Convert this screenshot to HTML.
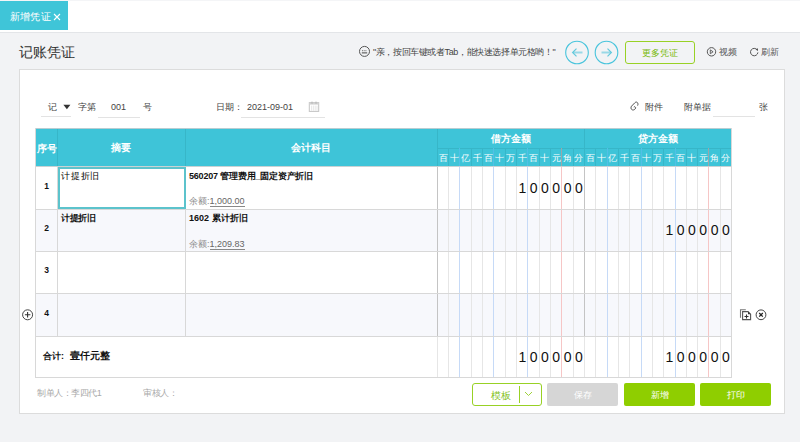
<!DOCTYPE html>
<html><head><meta charset="utf-8">
<style>
*{margin:0;padding:0;box-sizing:border-box}
html,body{width:800px;height:442px;overflow:hidden}
body{background:#f2f3f5;font-family:"Liberation Sans",sans-serif;color:#333;position:relative}
.a{position:absolute}
#top{left:0;top:0;width:800px;height:33px;background:#fff;border-bottom:1px solid #e3e5e8;border-top:1px solid #f4f5f7}
#tab{left:0;top:1px;width:68px;height:29px;background:#3fc5d8;color:#fff;font-size:10px;line-height:32px;letter-spacing:0.2px;padding-left:10px;white-space:nowrap}
#title{left:19px;top:42px;font-size:14px;letter-spacing:0.1px;line-height:20px;color:#333}
#tip{left:373px;top:45.5px;font-size:9px;letter-spacing:-0.4px;line-height:12px;color:#444;white-space:nowrap}
.circ{width:24px;height:24px;border:1px solid #5cc8dc;border-radius:50%;top:40.5px}
#more{left:625px;top:41px;width:70px;height:23px;border:1px solid #98d125;border-radius:3px;color:#78b90a;font-size:9px;line-height:23px;text-align:center}
.tl{font-size:9px;line-height:12px;color:#555;white-space:nowrap}
#panel{left:19px;top:69px;width:766px;height:345px;background:#fff;border:1px solid #dcdcdc}
.lbl{font-size:9px;line-height:12px;color:#444;white-space:nowrap}
.ul{height:1px;background:#e3e3e3}
#tbl{left:35px;top:128px;width:697px;height:250px;border:1px solid #d5d5d5}
.hd{background:#3fc5d8;color:#fff;font-weight:bold;font-size:10px;text-align:center}
.vl{width:1px}
.hl{height:1px}
.dig{font-size:14px;line-height:16px;color:#111;text-align:center;width:11.3px}
.sub{font-size:10px;color:#fff;text-align:center;width:11.3px;line-height:12px}
.btn{top:383px;height:23px;border-radius:2px;font-size:9px;line-height:25px;text-align:center;color:#fff}
</style></head><body>
<div id="top" class="a"></div>
<div id="tab" class="a">新增凭证</div>
<svg class="a" style="left:53px;top:13px" width="8" height="8" viewBox="0 0 8 8"><path d="M1 1L7 7M7 1L1 7" stroke="#fff" stroke-width="1.1"/></svg>
<div id="title" class="a">记账凭证</div>
<svg class="a" style="left:358px;top:45px" width="13" height="13" viewBox="0 0 13 13"><circle cx="6.5" cy="6.4" r="5" fill="none" stroke="#555" stroke-width="1"/><path d="M4 5.6h5" stroke="#888" stroke-width="1.3" stroke-dasharray="1 0.7" fill="none"/><path d="M3.8 7.9h5.4" stroke="#444" stroke-width="1" fill="none"/></svg>
<div id="tip" class="a">"亲，按回车键或者Tab，能快速选择单元格哟！"</div>
<svg class="a" style="left:564px;top:40px" width="26" height="26" viewBox="0 0 26 26"><circle cx="13" cy="12.5" r="11.3" fill="none" stroke="#48c4dc" stroke-width="1.1"/><path d="M9 12.5H18.5" stroke="#9ad8e6" stroke-width="2" fill="none"/><path d="M12.5 8.6L8.6 12.5L12.5 16.4" stroke="#62c9dc" stroke-width="1.2" fill="none"/></svg>
<svg class="a" style="left:594px;top:40px" width="26" height="26" viewBox="0 0 26 26"><circle cx="12.5" cy="12.5" r="11.3" fill="none" stroke="#48c4dc" stroke-width="1.1"/><path d="M7.5 12.5H17" stroke="#9ad8e6" stroke-width="2" fill="none"/><path d="M13.5 8.6L17.4 12.5L13.5 16.4" stroke="#62c9dc" stroke-width="1.2" fill="none"/></svg>
<div id="more" class="a">更多凭证</div>
<svg class="a" style="left:706px;top:46px" width="11" height="11" viewBox="0 0 11 11"><circle cx="5.5" cy="5.8" r="4.2" fill="none" stroke="#555" stroke-width="1"/><path d="M4.3 3.9L7.1 5.8L4.3 7.7Z" fill="none" stroke="#555" stroke-width="0.9"/></svg>
<div class="a tl" style="left:719px;top:46px">视频</div>
<svg class="a" style="left:749px;top:46px" width="11" height="11" viewBox="0 0 11 11"><path d="M8.2 3.9A3.7 3.7 0 1 0 8.9 6.4" fill="none" stroke="#555" stroke-width="1"/><path d="M6.6 3.6L9 2.3L9 4.9Z" fill="#555"/></svg>
<div class="a tl" style="left:761px;top:46px">刷新</div>

<div id="panel" class="a"></div>
<div class="a lbl" style="left:48px;top:101px">记</div>
<div class="a ul" style="left:41px;top:116px;width:30px"></div>
<svg class="a" style="left:63px;top:104px" width="8" height="6" viewBox="0 0 8 6"><path d="M0.4 0.8H7.4L3.9 5.2Z" fill="#333"/></svg>
<div class="a lbl" style="left:78px;top:101px">字第</div>
<div class="a lbl" style="left:111px;top:101px">001</div>
<div class="a ul" style="left:98px;top:117px;width:42px"></div>
<div class="a lbl" style="left:143px;top:101px">号</div>
<div class="a lbl" style="left:216px;top:101px">日期：</div>
<div class="a lbl" style="left:247px;top:101px">2021-09-01</div>
<div class="a ul" style="left:241px;top:117px;width:84px"></div>
<svg class="a" style="left:308px;top:100px" width="12" height="13" viewBox="0 0 12 13"><rect x="1.3" y="2.6" width="9.4" height="8.8" fill="#fff" stroke="#c4c4c4" stroke-width="1"/><rect x="1.3" y="2.6" width="9.4" height="2" fill="#d2d2d2"/><path d="M3.6 5.6v5.2M5.4 5.6v5.2M7.2 5.6v5.2M9 5.6v5.2" stroke="#e4e4e4" stroke-width="0.9"/><path d="M4 1.6v2.2M8 1.6v2.2" stroke="#b5b5b5" stroke-width="1"/></svg>
<svg class="a" style="left:627px;top:99px" width="16" height="14" viewBox="0 0 16 14"><path d="M10.6 6.6C11.2 5.6 11.2 3.6 9.6 3.1C8.9 2.9 8.3 3.3 7.8 3.8L4.5 7.2C3.6 8.2 3.8 10.4 5.4 10.9C6.8 11.3 8.4 10.3 8.6 9C8.8 7.9 7.6 7.3 6.8 8.1" fill="none" stroke="#4a4a4a" stroke-width="0.95"/></svg>
<div class="a lbl" style="left:645px;top:101px">附件</div>
<div class="a lbl" style="left:684px;top:101px">附单据</div>
<div class="a ul" style="left:713px;top:116px;width:42px"></div>
<div class="a lbl" style="left:759px;top:101px">张</div>

<div class="a" style="left:35.00px;top:128.00px;width:696.00px;height:249.00px;background:#fff;"></div>
<div class="a" style="left:35.00px;top:209.00px;width:696.00px;height:42.00px;background:#f7f8fc;"></div>
<div class="a" style="left:35.00px;top:293.00px;width:696.00px;height:43.00px;background:#f7f8fc;"></div>
<div class="a" style="left:35.00px;top:128.00px;width:696.00px;height:38.00px;background:#3ec4d8;"></div>
<div class="a" style="left:57.00px;top:128.00px;width:1.00px;height:38.00px;background:#37b6c8;"></div>
<div class="a" style="left:185.00px;top:128.00px;width:1.00px;height:38.00px;background:#37b6c8;"></div>
<div class="a" style="left:437.00px;top:128.00px;width:1.00px;height:38.00px;background:#37b6c8;"></div>
<div class="a" style="left:584.00px;top:128.00px;width:1.00px;height:38.00px;background:#37b6c8;"></div>
<div class="a" style="left:437.00px;top:148.00px;width:294.00px;height:1.00px;background:#37b6c8;"></div>
<div class="a" style="left:448.00px;top:148.00px;width:1.00px;height:18.00px;background:#37b6c8;"></div>
<div class="a" style="left:459.00px;top:148.00px;width:1.00px;height:18.00px;background:#52bfe6;"></div>
<div class="a" style="left:471.00px;top:148.00px;width:1.00px;height:18.00px;background:#37b6c8;"></div>
<div class="a" style="left:482.00px;top:148.00px;width:1.00px;height:18.00px;background:#37b6c8;"></div>
<div class="a" style="left:493.00px;top:148.00px;width:1.00px;height:18.00px;background:#52bfe6;"></div>
<div class="a" style="left:505.00px;top:148.00px;width:1.00px;height:18.00px;background:#37b6c8;"></div>
<div class="a" style="left:516.00px;top:148.00px;width:1.00px;height:18.00px;background:#37b6c8;"></div>
<div class="a" style="left:527.00px;top:148.00px;width:1.00px;height:18.00px;background:#52bfe6;"></div>
<div class="a" style="left:539.00px;top:148.00px;width:1.00px;height:18.00px;background:#37b6c8;"></div>
<div class="a" style="left:550.00px;top:148.00px;width:1.00px;height:18.00px;background:#37b6c8;"></div>
<div class="a" style="left:561.00px;top:148.00px;width:1.00px;height:18.00px;background:#9aa7ab;"></div>
<div class="a" style="left:573.00px;top:148.00px;width:1.00px;height:18.00px;background:#37b6c8;"></div>
<div class="a" style="left:437.50px;top:150.50px;width:11.31px;height:14.00px;line-height:14.00px;text-align:center;color:#fff;font-size:9px">百</div>
<div class="a" style="left:448.81px;top:150.50px;width:11.31px;height:14.00px;line-height:14.00px;text-align:center;color:#fff;font-size:9px">十</div>
<div class="a" style="left:460.12px;top:150.50px;width:11.31px;height:14.00px;line-height:14.00px;text-align:center;color:#fff;font-size:9px">亿</div>
<div class="a" style="left:471.42px;top:150.50px;width:11.31px;height:14.00px;line-height:14.00px;text-align:center;color:#fff;font-size:9px">千</div>
<div class="a" style="left:482.73px;top:150.50px;width:11.31px;height:14.00px;line-height:14.00px;text-align:center;color:#fff;font-size:9px">百</div>
<div class="a" style="left:494.04px;top:150.50px;width:11.31px;height:14.00px;line-height:14.00px;text-align:center;color:#fff;font-size:9px">十</div>
<div class="a" style="left:505.35px;top:150.50px;width:11.31px;height:14.00px;line-height:14.00px;text-align:center;color:#fff;font-size:9px">万</div>
<div class="a" style="left:516.65px;top:150.50px;width:11.31px;height:14.00px;line-height:14.00px;text-align:center;color:#fff;font-size:9px">千</div>
<div class="a" style="left:527.96px;top:150.50px;width:11.31px;height:14.00px;line-height:14.00px;text-align:center;color:#fff;font-size:9px">百</div>
<div class="a" style="left:539.27px;top:150.50px;width:11.31px;height:14.00px;line-height:14.00px;text-align:center;color:#fff;font-size:9px">十</div>
<div class="a" style="left:550.58px;top:150.50px;width:11.31px;height:14.00px;line-height:14.00px;text-align:center;color:#fff;font-size:9px">元</div>
<div class="a" style="left:561.88px;top:150.50px;width:11.31px;height:14.00px;line-height:14.00px;text-align:center;color:#fff;font-size:9px">角</div>
<div class="a" style="left:573.19px;top:150.50px;width:11.31px;height:14.00px;line-height:14.00px;text-align:center;color:#fff;font-size:9px">分</div>
<div class="a" style="left:470.50px;top:131.50px;width:80.00px;height:14.00px;line-height:14.00px;text-align:center;color:#fff;font-size:10px;font-weight:bold">借方金额</div>
<div class="a" style="left:595.00px;top:148.00px;width:1.00px;height:18.00px;background:#37b6c8;"></div>
<div class="a" style="left:607.00px;top:148.00px;width:1.00px;height:18.00px;background:#52bfe6;"></div>
<div class="a" style="left:618.00px;top:148.00px;width:1.00px;height:18.00px;background:#37b6c8;"></div>
<div class="a" style="left:629.00px;top:148.00px;width:1.00px;height:18.00px;background:#37b6c8;"></div>
<div class="a" style="left:641.00px;top:148.00px;width:1.00px;height:18.00px;background:#52bfe6;"></div>
<div class="a" style="left:652.00px;top:148.00px;width:1.00px;height:18.00px;background:#37b6c8;"></div>
<div class="a" style="left:663.00px;top:148.00px;width:1.00px;height:18.00px;background:#37b6c8;"></div>
<div class="a" style="left:675.00px;top:148.00px;width:1.00px;height:18.00px;background:#52bfe6;"></div>
<div class="a" style="left:686.00px;top:148.00px;width:1.00px;height:18.00px;background:#37b6c8;"></div>
<div class="a" style="left:697.00px;top:148.00px;width:1.00px;height:18.00px;background:#37b6c8;"></div>
<div class="a" style="left:708.00px;top:148.00px;width:1.00px;height:18.00px;background:#9aa7ab;"></div>
<div class="a" style="left:720.00px;top:148.00px;width:1.00px;height:18.00px;background:#37b6c8;"></div>
<div class="a" style="left:584.50px;top:150.50px;width:11.31px;height:14.00px;line-height:14.00px;text-align:center;color:#fff;font-size:9px">百</div>
<div class="a" style="left:595.81px;top:150.50px;width:11.31px;height:14.00px;line-height:14.00px;text-align:center;color:#fff;font-size:9px">十</div>
<div class="a" style="left:607.12px;top:150.50px;width:11.31px;height:14.00px;line-height:14.00px;text-align:center;color:#fff;font-size:9px">亿</div>
<div class="a" style="left:618.42px;top:150.50px;width:11.31px;height:14.00px;line-height:14.00px;text-align:center;color:#fff;font-size:9px">千</div>
<div class="a" style="left:629.73px;top:150.50px;width:11.31px;height:14.00px;line-height:14.00px;text-align:center;color:#fff;font-size:9px">百</div>
<div class="a" style="left:641.04px;top:150.50px;width:11.31px;height:14.00px;line-height:14.00px;text-align:center;color:#fff;font-size:9px">十</div>
<div class="a" style="left:652.35px;top:150.50px;width:11.31px;height:14.00px;line-height:14.00px;text-align:center;color:#fff;font-size:9px">万</div>
<div class="a" style="left:663.65px;top:150.50px;width:11.31px;height:14.00px;line-height:14.00px;text-align:center;color:#fff;font-size:9px">千</div>
<div class="a" style="left:674.96px;top:150.50px;width:11.31px;height:14.00px;line-height:14.00px;text-align:center;color:#fff;font-size:9px">百</div>
<div class="a" style="left:686.27px;top:150.50px;width:11.31px;height:14.00px;line-height:14.00px;text-align:center;color:#fff;font-size:9px">十</div>
<div class="a" style="left:697.58px;top:150.50px;width:11.31px;height:14.00px;line-height:14.00px;text-align:center;color:#fff;font-size:9px">元</div>
<div class="a" style="left:708.88px;top:150.50px;width:11.31px;height:14.00px;line-height:14.00px;text-align:center;color:#fff;font-size:9px">角</div>
<div class="a" style="left:720.19px;top:150.50px;width:11.31px;height:14.00px;line-height:14.00px;text-align:center;color:#fff;font-size:9px">分</div>
<div class="a" style="left:617.50px;top:131.50px;width:80.00px;height:14.00px;line-height:14.00px;text-align:center;color:#fff;font-size:10px;font-weight:bold">贷方金额</div>
<div class="a" style="left:34.50px;top:141.50px;width:24.00px;height:14.00px;line-height:14.00px;text-align:center;color:#fff;font-size:10px;font-weight:bold">序号</div>
<div class="a" style="left:91.00px;top:140.70px;width:60.00px;height:14.00px;line-height:14.00px;text-align:center;color:#fff;font-size:10px;font-weight:bold">摘要</div>
<div class="a" style="left:271.00px;top:140.70px;width:80.00px;height:14.00px;line-height:14.00px;text-align:center;color:#fff;font-size:10px;font-weight:bold">会计科目</div>
<div class="a" style="left:448.00px;top:166.00px;width:1.00px;height:211.00px;background:#e6e6e6;"></div>
<div class="a" style="left:459.00px;top:166.00px;width:1.00px;height:211.00px;background:#c6daf7;"></div>
<div class="a" style="left:471.00px;top:166.00px;width:1.00px;height:211.00px;background:#e6e6e6;"></div>
<div class="a" style="left:482.00px;top:166.00px;width:1.00px;height:211.00px;background:#e6e6e6;"></div>
<div class="a" style="left:493.00px;top:166.00px;width:1.00px;height:211.00px;background:#c6daf7;"></div>
<div class="a" style="left:505.00px;top:166.00px;width:1.00px;height:211.00px;background:#e6e6e6;"></div>
<div class="a" style="left:516.00px;top:166.00px;width:1.00px;height:211.00px;background:#e6e6e6;"></div>
<div class="a" style="left:527.00px;top:166.00px;width:1.00px;height:211.00px;background:#c6daf7;"></div>
<div class="a" style="left:539.00px;top:166.00px;width:1.00px;height:211.00px;background:#e6e6e6;"></div>
<div class="a" style="left:550.00px;top:166.00px;width:1.00px;height:211.00px;background:#e6e6e6;"></div>
<div class="a" style="left:561.00px;top:166.00px;width:1.00px;height:211.00px;background:#f6c6c6;"></div>
<div class="a" style="left:573.00px;top:166.00px;width:1.00px;height:211.00px;background:#e6e6e6;"></div>
<div class="a" style="left:595.00px;top:166.00px;width:1.00px;height:211.00px;background:#e6e6e6;"></div>
<div class="a" style="left:607.00px;top:166.00px;width:1.00px;height:211.00px;background:#c6daf7;"></div>
<div class="a" style="left:618.00px;top:166.00px;width:1.00px;height:211.00px;background:#e6e6e6;"></div>
<div class="a" style="left:629.00px;top:166.00px;width:1.00px;height:211.00px;background:#e6e6e6;"></div>
<div class="a" style="left:641.00px;top:166.00px;width:1.00px;height:211.00px;background:#c6daf7;"></div>
<div class="a" style="left:652.00px;top:166.00px;width:1.00px;height:211.00px;background:#e6e6e6;"></div>
<div class="a" style="left:663.00px;top:166.00px;width:1.00px;height:211.00px;background:#e6e6e6;"></div>
<div class="a" style="left:675.00px;top:166.00px;width:1.00px;height:211.00px;background:#c6daf7;"></div>
<div class="a" style="left:686.00px;top:166.00px;width:1.00px;height:211.00px;background:#e6e6e6;"></div>
<div class="a" style="left:697.00px;top:166.00px;width:1.00px;height:211.00px;background:#e6e6e6;"></div>
<div class="a" style="left:708.00px;top:166.00px;width:1.00px;height:211.00px;background:#f6c6c6;"></div>
<div class="a" style="left:720.00px;top:166.00px;width:1.00px;height:211.00px;background:#e6e6e6;"></div>
<div class="a" style="left:57.00px;top:166.00px;width:1.00px;height:170.00px;background:#d8d8d8;"></div>
<div class="a" style="left:185.00px;top:166.00px;width:1.00px;height:170.00px;background:#d8d8d8;"></div>
<div class="a" style="left:437.00px;top:166.00px;width:1.00px;height:170.00px;background:#c4c4c4;"></div>
<div class="a" style="left:437.00px;top:336.00px;width:1.00px;height:41.00px;background:#e6e6e6;"></div>
<div class="a" style="left:584.00px;top:166.00px;width:1.00px;height:170.00px;background:#c4c4c4;"></div>
<div class="a" style="left:584.00px;top:336.00px;width:1.00px;height:41.00px;background:#e6e6e6;"></div>
<div class="a" style="left:35.00px;top:209.00px;width:696.00px;height:1.00px;background:#d8d8d8;"></div>
<div class="a" style="left:35.00px;top:251.00px;width:696.00px;height:1.00px;background:#d8d8d8;"></div>
<div class="a" style="left:35.00px;top:293.00px;width:696.00px;height:1.00px;background:#d8d8d8;"></div>
<div class="a" style="left:35.00px;top:336.00px;width:696.00px;height:1.00px;background:#d8d8d8;"></div>
<div class="a" style="left:35.00px;top:166.00px;width:696.00px;height:1.00px;background:#c9d2d4;"></div>
<div class="a" style="left:35.00px;top:128.00px;width:697.00px;height:1.00px;background:#b8cdd2;"></div>
<div class="a" style="left:35.00px;top:128.00px;width:1.00px;height:250.00px;background:#d8d8d8;"></div>
<div class="a" style="left:731.00px;top:128.00px;width:1.00px;height:250.00px;background:#d8d8d8;"></div>
<div class="a" style="left:35.00px;top:377.00px;width:697.00px;height:1.00px;background:#d8d8d8;"></div>
<div class="a" style="left:36.50px;top:178.80px;width:20.00px;height:14.00px;line-height:14.00px;text-align:center;color:#111;font-size:8.5px;font-weight:bold">1</div>
<div class="a" style="left:36.50px;top:221.30px;width:20.00px;height:14.00px;line-height:14.00px;text-align:center;color:#111;font-size:8.5px;font-weight:bold">2</div>
<div class="a" style="left:36.50px;top:263.30px;width:20.00px;height:14.00px;line-height:14.00px;text-align:center;color:#111;font-size:8.5px;font-weight:bold">3</div>
<div class="a" style="left:36.50px;top:305.80px;width:20.00px;height:14.00px;line-height:14.00px;text-align:center;color:#111;font-size:8.5px;font-weight:bold">4</div>
<div class="a" style="left:57.50px;top:167.00px;width:128.00px;height:42.00px;border:2px solid #5cc3cc;background:#fff"></div>
<div class="a" style="left:61.00px;top:169.00px;font-size:9px;line-height:14px;color:#000;letter-spacing:0.8px;white-space:nowrap">计提折旧</div>
<div class="a" style="left:61.00px;top:211.00px;font-size:9px;line-height:14px;color:#111;font-weight:bold;letter-spacing:-0.5px;white-space:nowrap">计提折旧</div>
<div class="a" style="left:189.00px;top:169.00px;font-size:9px;line-height:14px;color:#111;font-weight:bold;letter-spacing:-0.2px;white-space:nowrap">560207 管理费用_固定资产折旧</div>
<div class="a" style="left:189.00px;top:194.00px;font-size:9px;line-height:14px;color:#8a8a8a;white-space:nowrap">余额:<span style="border-bottom:1px solid #888;color:#666">1,000.00</span></div>
<div class="a" style="left:189.00px;top:211.00px;font-size:9px;line-height:14px;color:#111;font-weight:bold;white-space:nowrap">1602 累计折旧</div>
<div class="a" style="left:189.00px;top:236.50px;font-size:9px;line-height:14px;color:#8a8a8a;white-space:nowrap">余额:<span style="border-bottom:1px solid #888;color:#666">1,209.83</span></div>
<div class="a" style="left:516.65px;top:179.50px;width:11.31px;height:16.00px;line-height:16.00px;text-align:center;color:#111;font-size:14px">1</div>
<div class="a" style="left:527.96px;top:179.50px;width:11.31px;height:16.00px;line-height:16.00px;text-align:center;color:#111;font-size:14px">0</div>
<div class="a" style="left:539.27px;top:179.50px;width:11.31px;height:16.00px;line-height:16.00px;text-align:center;color:#111;font-size:14px">0</div>
<div class="a" style="left:550.58px;top:179.50px;width:11.31px;height:16.00px;line-height:16.00px;text-align:center;color:#111;font-size:14px">0</div>
<div class="a" style="left:561.88px;top:179.50px;width:11.31px;height:16.00px;line-height:16.00px;text-align:center;color:#111;font-size:14px">0</div>
<div class="a" style="left:573.19px;top:179.50px;width:11.31px;height:16.00px;line-height:16.00px;text-align:center;color:#111;font-size:14px">0</div>
<div class="a" style="left:663.65px;top:222.00px;width:11.31px;height:16.00px;line-height:16.00px;text-align:center;color:#111;font-size:14px">1</div>
<div class="a" style="left:674.96px;top:222.00px;width:11.31px;height:16.00px;line-height:16.00px;text-align:center;color:#111;font-size:14px">0</div>
<div class="a" style="left:686.27px;top:222.00px;width:11.31px;height:16.00px;line-height:16.00px;text-align:center;color:#111;font-size:14px">0</div>
<div class="a" style="left:697.58px;top:222.00px;width:11.31px;height:16.00px;line-height:16.00px;text-align:center;color:#111;font-size:14px">0</div>
<div class="a" style="left:708.88px;top:222.00px;width:11.31px;height:16.00px;line-height:16.00px;text-align:center;color:#111;font-size:14px">0</div>
<div class="a" style="left:720.19px;top:222.00px;width:11.31px;height:16.00px;line-height:16.00px;text-align:center;color:#111;font-size:14px">0</div>
<div class="a" style="left:516.65px;top:349.30px;width:11.31px;height:16.00px;line-height:16.00px;text-align:center;color:#111;font-size:14px">1</div>
<div class="a" style="left:527.96px;top:349.30px;width:11.31px;height:16.00px;line-height:16.00px;text-align:center;color:#111;font-size:14px">0</div>
<div class="a" style="left:539.27px;top:349.30px;width:11.31px;height:16.00px;line-height:16.00px;text-align:center;color:#111;font-size:14px">0</div>
<div class="a" style="left:550.58px;top:349.30px;width:11.31px;height:16.00px;line-height:16.00px;text-align:center;color:#111;font-size:14px">0</div>
<div class="a" style="left:561.88px;top:349.30px;width:11.31px;height:16.00px;line-height:16.00px;text-align:center;color:#111;font-size:14px">0</div>
<div class="a" style="left:573.19px;top:349.30px;width:11.31px;height:16.00px;line-height:16.00px;text-align:center;color:#111;font-size:14px">0</div>
<div class="a" style="left:663.65px;top:349.30px;width:11.31px;height:16.00px;line-height:16.00px;text-align:center;color:#111;font-size:14px">1</div>
<div class="a" style="left:674.96px;top:349.30px;width:11.31px;height:16.00px;line-height:16.00px;text-align:center;color:#111;font-size:14px">0</div>
<div class="a" style="left:686.27px;top:349.30px;width:11.31px;height:16.00px;line-height:16.00px;text-align:center;color:#111;font-size:14px">0</div>
<div class="a" style="left:697.58px;top:349.30px;width:11.31px;height:16.00px;line-height:16.00px;text-align:center;color:#111;font-size:14px">0</div>
<div class="a" style="left:708.88px;top:349.30px;width:11.31px;height:16.00px;line-height:16.00px;text-align:center;color:#111;font-size:14px">0</div>
<div class="a" style="left:720.19px;top:349.30px;width:11.31px;height:16.00px;line-height:16.00px;text-align:center;color:#111;font-size:14px">0</div>
<div class="a" style="left:43.00px;top:349.00px;font-size:9px;line-height:14px;color:#111;font-weight:bold;white-space:nowrap">合计:</div>
<div class="a" style="left:69.50px;top:348.50px;font-size:10px;line-height:14px;color:#111;font-weight:bold;white-space:nowrap">壹仟元整</div>

<div class="a btn" style="left:472px;width:70px;border:1px solid #98d125;border-radius:3px;color:#84c21c;background:#fff;text-align:left;padding-left:18px;font-size:10px;line-height:23px">模板</div>
<div class="a" style="left:519px;top:386px;width:1px;height:17px;background:#98d125"></div>
<svg class="a" style="left:524px;top:391px" width="9" height="6" viewBox="0 0 9 6"><path d="M1 1L4.5 4.5L8 1" fill="none" stroke="#9fd33a" stroke-width="1"/></svg>
<svg class="a" style="left:20px;top:307px" width="16" height="16" viewBox="0 0 16 16"><circle cx="7.6" cy="7.8" r="5" fill="none" stroke="#444" stroke-width="1"/><path d="M4.9 7.8H10.4M7.6 5V10.5" stroke="#333" stroke-width="1.1"/></svg>
<svg class="a" style="left:738px;top:307px" width="16" height="16" viewBox="0 0 16 16"><path d="M2.5 10.8V2.8H7.8" fill="none" stroke="#777" stroke-width="1.1"/><path d="M4.6 4.6H10L12.6 7.2V12.6H4.6Z" fill="#fff" stroke="#555" stroke-width="1.1"/><path d="M10 4.6V7.2H12.6" fill="#333"/><path d="M6.5 9.5H10.5M8.5 7.5V11.5" stroke="#333" stroke-width="1.1"/></svg>
<svg class="a" style="left:753px;top:307px" width="16" height="16" viewBox="0 0 16 16"><circle cx="8" cy="7.8" r="4.9" fill="none" stroke="#444" stroke-width="1"/><path d="M6.2 6L9.8 9.6M9.8 6L6.2 9.6" stroke="#222" stroke-width="1.3"/></svg>
<div class="a btn" style="left:547px;width:71px;background:#d6d6d6">保存</div>
<div class="a btn" style="left:624px;width:71px;background:#8fce00">新增</div>
<div class="a btn" style="left:700px;width:71px;background:#8fce00">打印</div>
<div class="a lbl" style="left:37px;top:387px;color:#aaa;letter-spacing:-0.45px">制单人：李四代1</div>
<div class="a lbl" style="left:143px;top:387px;color:#aaa;letter-spacing:-0.45px">审核人：</div>
</body></html>
